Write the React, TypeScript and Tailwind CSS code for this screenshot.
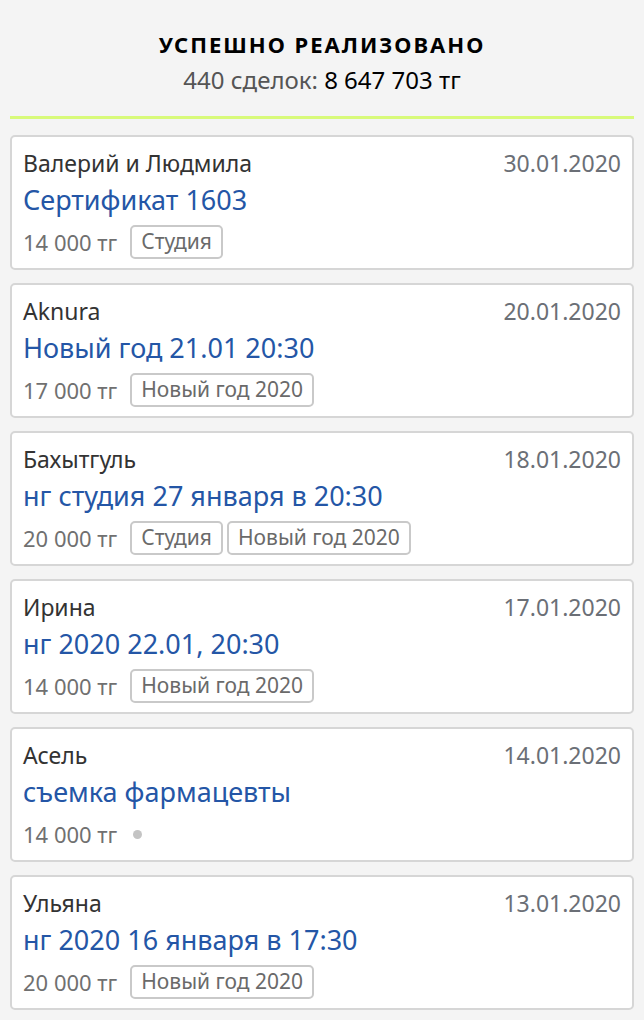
import React from "react";

type Deal = {
  id: number;
  name: string;
  date: string;
  title: string;
  price: string;
  tags: string[];
};

const deals: Deal[] = [
  { id: 1, name: "Валерий и Людмила", date: "30.01.2020", title: "Сертификат 1603", price: "14 000 тг", tags: ["Студия"] },
  { id: 2, name: "Aknura", date: "20.01.2020", title: "Новый год 21.01 20:30", price: "17 000 тг", tags: ["Новый год 2020"] },
  { id: 3, name: "Бахытгуль", date: "18.01.2020", title: "нг студия 27 января в 20:30", price: "20 000 тг", tags: ["Студия", "Новый год 2020"] },
  { id: 4, name: "Ирина", date: "17.01.2020", title: "нг 2020 22.01, 20:30", price: "14 000 тг", tags: ["Новый год 2020"] },
  { id: 5, name: "Асель", date: "14.01.2020", title: "съемка фармацевты", price: "14 000 тг", tags: [] },
  { id: 6, name: "Ульяна", date: "13.01.2020", title: "нг 2020 16 января в 17:30", price: "20 000 тг", tags: ["Новый год 2020"] },
];

function DealCard({ deal }: { deal: Deal }) {
  return (
    <div className="bg-white border-2 border-[#d6d6d6] rounded-[5px] px-[11px] pt-[11px] pb-[9px]">
      <div className="flex items-center justify-between leading-[30px]">
        <span className="text-[23px] text-[#333]">{deal.name}</span>
        <span className="text-[23px] text-[#6b6f76]">{deal.date}</span>
      </div>
      <div className="text-[27px] leading-[44px] text-[#2456a6]">{deal.title}</div>
      <div className="mt-[3px] flex items-center gap-[4px] h-[34px]">
        <span className="text-[22px] text-[#707070] mr-[9px]">{deal.price}</span>
        {deal.tags.length === 0 && <span className="w-[9px] h-[9px] rounded-full bg-[#c4c4c4] ml-[3px]" />}
        {deal.tags.map((t) => (
          <span
            key={t}
            className="h-[34px] flex items-center px-[9px] border-2 border-[#c9c9c9] rounded-[5px] text-[21px] text-[#6a6a6a]"
          >
            {t}
          </span>
        ))}
      </div>
    </div>
  );
}

export default function App() {
  return (
    <div
      className="min-h-screen bg-[#f4f4f4] px-[10px] pt-[28px] pb-[20px]"
      style={{ fontFamily: '"Noto Sans", "Open Sans", sans-serif' }}
    >
      <div className="text-center">
        <h1 className="text-[22px] leading-[32px] font-bold tracking-[2px] text-black">УСПЕШНО РЕАЛИЗОВАНО</h1>
        <p className="mt-[4px] text-[24px] leading-[32px]">
          <span className="text-[#555]">440 сделок: </span>
          <span className="text-black">8 647 703 тг</span>
        </p>
      </div>
      <div className="mt-[20px] h-[3px] bg-[#d8fa7a]" />
      <div className="mt-[16px] flex flex-col gap-[13px]">
        {deals.map((d) => (
          <DealCard key={d.id} deal={d} />
        ))}
      </div>
    </div>
  );
}
